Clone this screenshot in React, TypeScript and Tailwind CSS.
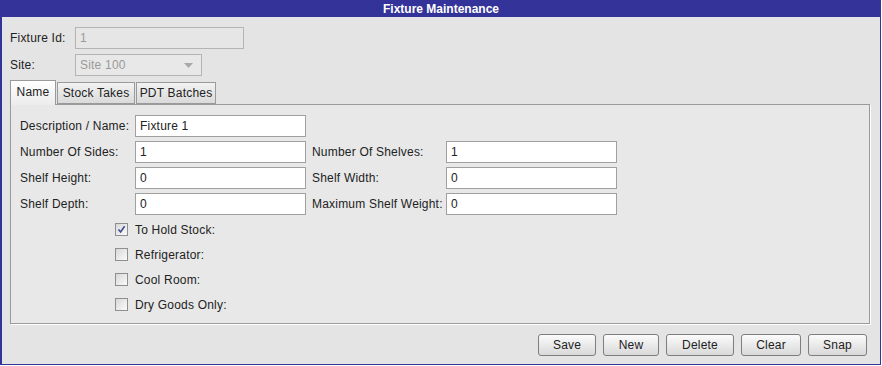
import React from "react";

const font = { fontFamily: '"Liberation Sans", Arial, sans-serif' };

function TextBox({ value, w, disabled }: { value: string; w: string; disabled?: boolean }) {
  return (
    <div
      className={`${w} h-[22px] flex items-center px-[4px] border ${
        disabled ? "border-[#b4b4b4] bg-[#e6e6e6] text-[#9a9a9a]" : "border-[#a0a0a0] bg-white text-[#222]"
      }`}
    >
      {value}
    </div>
  );
}

function Check({ checked, label }: { checked?: boolean; label: string }) {
  return (
    <div className="h-[25px] flex items-center pl-[95px]">
      <div className="w-[13px] h-[13px] border border-[#8f8f8f] bg-gradient-to-br from-[#d8d8d8] to-[#fbfbfb] flex items-center justify-center">
        {checked && (
          <svg width="9" height="9" viewBox="0 0 9 9">
            <path d="M1.5 4.5 L3.6 7 L7.6 1.2" fill="none" stroke="#3b4d94" strokeWidth="1.6" />
          </svg>
        )}
      </div>
      <span className="ml-[7px]">{label}</span>
    </div>
  );
}

function Btn({ label, w }: { label: string; w: string }) {
  return (
    <div
      className={`${w} h-[22px] flex items-center justify-center rounded-[3px] border border-[#7e7e7e] bg-gradient-to-b from-[#fbfbfb] to-[#d9d9d9] text-[#222]`}
    >
      {label}
    </div>
  );
}

export default function App() {
  return (
    <div className="w-[882px] h-[366px] bg-white text-[12px] text-[#222]" style={font}>
      <div className="w-[881px] h-[365px] border-l-2 border-r border-b border-[#333399] bg-[#e4e4e4] flex flex-col">
        <div className="h-[17px] bg-[#333399] text-white font-bold flex items-center justify-center shrink-0">
          Fixture Maintenance
        </div>
        <div className="pl-[8px] pr-[10px] pt-[10px] flex flex-col tracking-[0.2px]">
          <div className="flex items-center h-[22px]">
            <span className="w-[65px]">Fixture Id:</span>
            <TextBox value="1" w="w-[169px]" disabled />
          </div>
          <div className="flex items-center h-[22px] mt-[5px]">
            <span className="w-[65px]">Site:</span>
            <div className="w-[127px] h-[22px] flex items-center justify-between px-[4px] border border-[#b4b4b4] bg-[#e8e8e8] text-[#9a9a9a]">
              <span>Site 100</span>
              <svg width="9" height="5" viewBox="0 0 9 5" className="mr-[4px]">
                <path d="M0 0 L9 0 L4.5 5 Z" fill="#a8a8a8" />
              </svg>
            </div>
          </div>
          <div className="flex items-end h-[26px] mt-[2px]">
            <div className="w-[46px] h-[25px] border border-b-0 border-[#9a9a9a] bg-gradient-to-b from-white to-[#ececec] flex items-center justify-center -mb-px relative z-10 pb-[2px]">
              Name
            </div>
            <div className="w-[78px] h-[22px] ml-[1px] border border-[#9a9a9a] bg-gradient-to-b from-[#f2f2f2] to-[#dadada] flex items-center justify-center">
              Stock Takes
            </div>
            <div className="w-[80px] h-[22px] ml-[1px] border border-[#9a9a9a] bg-gradient-to-b from-[#f2f2f2] to-[#dadada] flex items-center justify-center">
              PDT Batches
            </div>
          </div>
          <div className="w-[860px] h-[220px] border border-[#9a9a9a] bg-[#e8e8e8] shadow-[1px_1px_0_#ffffff] pl-[9px] pt-[10px] flex flex-col">
            <div className="flex items-center h-[22px]">
              <span className="w-[115px]">Description / Name:</span>
              <TextBox value="Fixture 1" w="w-[171px]" />
            </div>
            <div className="flex items-center h-[22px] mt-[4px]">
              <span className="w-[115px]">Number Of Sides:</span>
              <TextBox value="1" w="w-[171px]" />
              <span className="w-[134px] ml-[6px]">Number Of Shelves:</span>
              <TextBox value="1" w="w-[171px]" />
            </div>
            <div className="flex items-center h-[22px] mt-[4px]">
              <span className="w-[115px]">Shelf Height:</span>
              <TextBox value="0" w="w-[171px]" />
              <span className="w-[134px] ml-[6px]">Shelf Width:</span>
              <TextBox value="0" w="w-[171px]" />
            </div>
            <div className="flex items-center h-[22px] mt-[4px]">
              <span className="w-[115px]">Shelf Depth:</span>
              <TextBox value="0" w="w-[171px]" />
              <span className="w-[134px] ml-[6px]">Maximum Shelf Weight:</span>
              <TextBox value="0" w="w-[171px]" />
            </div>
            <div className="mt-[2px] flex flex-col">
              <Check checked label="To Hold Stock:" />
              <Check label="Refrigerator:" />
              <Check label="Cool Room:" />
              <Check label="Dry Goods Only:" />
            </div>
          </div>
          <div className="flex justify-end gap-[7px] mt-[10px] pr-[3px]">
            <Btn label="Save" w="w-[58px]" />
            <Btn label="New" w="w-[56px]" />
            <Btn label="Delete" w="w-[68px]" />
            <Btn label="Clear" w="w-[60px]" />
            <Btn label="Snap" w="w-[59px]" />
          </div>
        </div>
      </div>
    </div>
  );
}
